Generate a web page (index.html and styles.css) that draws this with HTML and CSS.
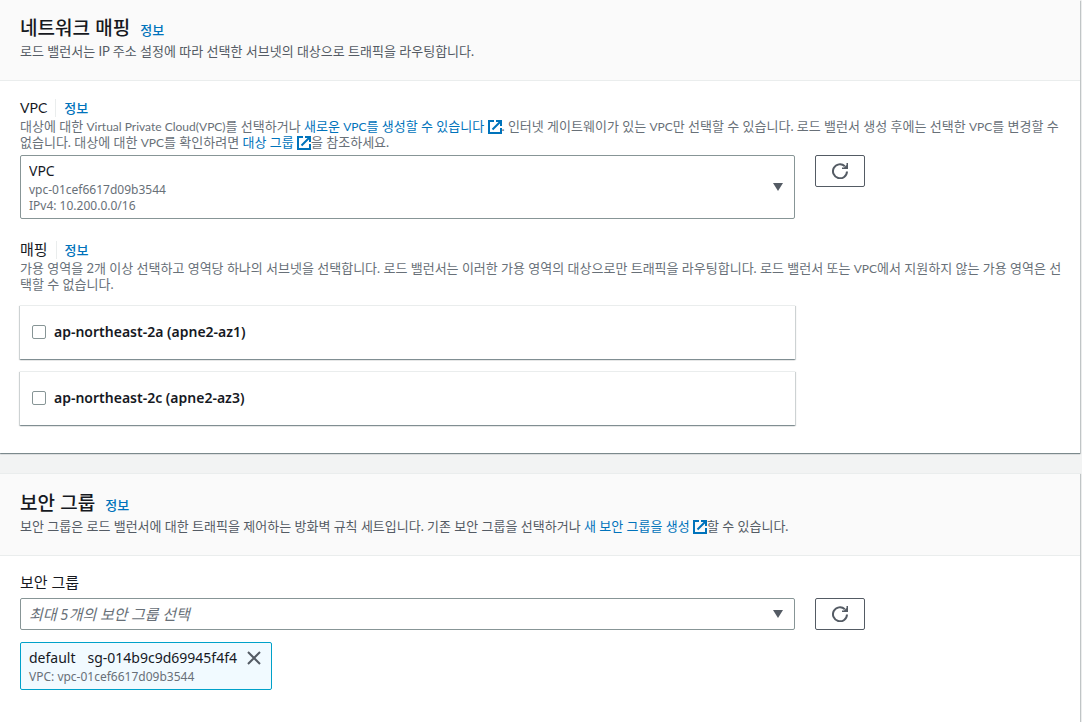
FILE: index.html
```html
<!DOCTYPE html>
<html lang="ko">
<head>
  <meta charset="UTF-8" />
  <meta name="viewport" content="width=device-width, initial-scale=1.0" />
  <title>로드 밸런서 생성</title>
  <link rel="stylesheet" href="styles.css">
</head>
<body>
  <svg class="sprite" aria-hidden="true">
    <symbol id="external" viewBox="0 0 14 14">
      <path d="M6 1H1v12h12V8" fill="none" stroke="currentColor" stroke-width="2" />
      <path d="M8 1h5v5M13 1L4.500 9.500" fill="none" stroke="currentColor" stroke-width="2" />
    </symbol>
    <symbol id="refresh" viewBox="0 0 16 16">
      <path d="M15 8.500A7 7 0 1 1 12.800 3.200" fill="none" stroke="currentColor" stroke-width="2" />
      <path d="M16 0v6h-6V4.500h2L14.500 2V0z" fill="currentColor" />
    </symbol>
    <symbol id="close" viewBox="0 0 14 14">
      <path d="M1 1l12 12M13 1L1 13" fill="none" stroke="currentColor" stroke-width="2" />
    </symbol>
    <symbol id="caret" viewBox="0 0 10 8">
      <path d="M0 0h10L5 8z" fill="currentColor" />
    </symbol>
  </svg>

  <main>
    <section class="panel">
      <header class="panel-header">
        <div class="title"><h2>네트워크 매핑</h2> <a href="#">정보</a></div>
        <p>로드 밸런서는 IP 주소 설정에 따라 선택한 서브넷의 대상으로 트래픽을 라우팅합니다.</p>
      </header>
      <div class="panel-body">
        <div class="field">
          <div class="label"><label class="name-en" for="vpc">VPC</label><a class="info" href="#">정보</a></div>
          <p class="hint">대상에 대한 <span class="en">Virtual Private Cloud(VPC)</span>를 선택하거나 <a href="#">새로운 <span class="en">VPC</span>를 생성할 수 있습니다 <svg class="external"><use href="#external" /></svg></a>. 인터넷 게이트웨이가 있는 <span class="en">VPC</span>만 선택할 수 있습니다. 로드 밸런서 생성 후에는 선택한 <span class="en">VPC</span>를 변경할 수<br>없습니다. 대상에 대한 <span class="en">VPC</span>를 확인하려면 <a href="#">대상 그룹 <svg class="external"><use href="#external" /></svg></a>을 참조하세요.</p>
          <div class="row">
            <div class="select select-tall">
              <select id="vpc"><option>VPC</option></select>
              <div class="meta">vpc-01cef6617d09b3544<br>IPv4: 10.200.0.0/16</div>
              <svg class="caret"><use href="#caret" /></svg>
            </div>
            <button class="refresh" aria-label="VPC 새로 고침"><svg><use href="#refresh" /></svg></button>
          </div>
        </div>

        <div class="field">
          <div class="label"><span>매핑</span><a class="info" href="#">정보</a></div>
          <p class="hint">가용 영역을 2개 이상 선택하고 영역당 하나의 서브넷을 선택합니다. 로드 밸런서는 이러한 가용 영역의 대상으로만 트래픽을 라우팅합니다. 로드 밸런서 또는 <span class="en">VPC</span>에서 지원하지 않는 가용 영역은 선<br>택할 수 없습니다.</p>
          <div class="row zones">
            <label class="zone"><input type="checkbox"> ap-northeast-2a (apne2-az1)</label>
            <label class="zone"><input type="checkbox"> ap-northeast-2c (apne2-az3)</label>
          </div>
        </div>
      </div>
    </section>

    <section class="panel">
      <header class="panel-header">
        <div class="title"><h2>보안 그룹</h2> <a href="#">정보</a></div>
        <p>보안 그룹은 로드 밸런서에 대한 트래픽을 제어하는 방화벽 규칙 세트입니다. 기존 보안 그룹을 선택하거나 <a href="#">새 보안 그룹을 생성 <svg class="external"><use href="#external" /></svg></a>할 수 있습니다.</p>
      </header>
      <div class="panel-body">
        <div class="field">
          <div class="label"><label for="groups">보안 그룹</label></div>
          <div class="row">
            <div class="select">
              <select id="groups" class="placeholder"><option>최대 5개의 보안 그룹 선택</option></select>
              <svg class="caret"><use href="#caret" /></svg>
            </div>
            <button class="refresh" aria-label="보안 그룹 새로 고침"><svg><use href="#refresh" /></svg></button>
          </div>
          <div class="token">
            <div>
              <div class="token-name"><span>default</span><span>sg-014b9c9d69945f4f4</span></div>
              <div class="token-vpc">VPC: vpc-01cef6617d09b3544</div>
            </div>
            <button aria-label="default 제거"><svg><use href="#close" /></svg></button>
          </div>
        </div>
      </div>
    </section>
  </main>
</body>
</html>
```
FILE: styles.css
```css
* { box-sizing: border-box; }
body { margin: 0; background: #f2f3f3; color: #16191f; font: 14px/22px "Noto Sans", "Noto Sans CJK KR", sans-serif; }
h2, p { margin: 0; }
a { color: #0073bb; text-decoration: none; }
button { padding: 0; cursor: pointer; color: #545b64; }
.sprite { display: none; }

main { display: flex; flex-direction: column; gap: 20px; padding-right: 2px; }
.panel { background: #fff; box-shadow: 0 1px 1px 0 rgba(0, 28, 36, 0.4), 1px 1px 1px 0 rgba(0, 28, 36, 0.15); }
.panel + .panel { border-top: 1px solid #eaeded; }
.panel-header { padding: 15px 20px 19px; background: #fafafa; border-bottom: 1px solid #eaeded; }
.panel + .panel .panel-header { padding-top: 16px; }
.title { display: flex; align-items: baseline; gap: 10px; line-height: 24px; }
.title h2 { font-size: 19px; font-weight: 500; font-family: "Noto Sans CJK KR", sans-serif; }
.title a { font: 500 13px/24px "Noto Sans CJK KR", sans-serif; }
.panel-header p { color: #545b64; font: 13px/19px Lato, "Noto Sans CJK KR", sans-serif; }
.panel-body { padding: 16px 20px 28px; display: flex; flex-direction: column; gap: 20px; }
.panel:last-child .panel-body { padding-bottom: 40px; }
.external { width: 14px; height: 14px; vertical-align: -3px; }

.label { display: flex; align-items: center; font-size: 15px; line-height: 21px; font-family: Lato, "Noto Sans CJK KR", sans-serif; }
.name-en { font-size: 14px; }
.info { margin-left: 8px; padding-left: 8px; border-left: 1px solid #eaeded; font-size: 13px; font-weight: 500; line-height: 18px; }
.hint { margin-right: -20px; color: #687078; font: 13px/16px Lato, "Noto Sans CJK KR", sans-serif; }
.en { font-size: 12px; line-height: 12px; }
.row { display: grid; grid-template-columns: repeat(12, 1fr); column-gap: 20px; align-items: start; margin-top: 5px; }

.select { grid-column: span 9; display: grid; }
.select > * { grid-area: 1 / 1; }
.select select { appearance: none; height: 32px; padding: 0 32px 0 8px; border: 1px solid #879596; border-radius: 2px; background: #fff; color: #16191f; font: inherit; }
.select-tall select { height: 64px; padding-bottom: 32px; }
.select .placeholder { color: #687078; font-size: 15px; font-style: italic; font-family: Lato, "Noto Sans CJK KR", sans-serif; }
.meta { align-self: end; padding: 0 9px 5px; color: #687078; font-size: 12px; line-height: 16px; pointer-events: none; }
.caret { width: 10px; height: 8px; margin-right: 12px; align-self: center; justify-self: end; color: #545b64; pointer-events: none; }
.refresh { width: 50px; height: 32px; display: grid; place-items: center; border: 1px solid #545b64; border-radius: 2px; background: #fff; }
.refresh svg { width: 16px; height: 16px; }

.zones { row-gap: 12px; margin-top: 13px; }
.zone { grid-column: 1 / span 9; display: flex; align-items: center; gap: 8px; height: 54px; padding: 0 12px 2px; border-top: 1px solid #eaeded; box-shadow: 0 1px 1px 0 rgba(0, 28, 36, 0.3), 1px 1px 1px 0 rgba(0, 28, 36, 0.15), -1px 1px 1px 0 rgba(0, 28, 36, 0.15); font-weight: 600; }
.zone input { appearance: none; width: 14px; height: 14px; margin: 0; border: 1px solid #879596; border-radius: 2px; background: #fff; }
.zone input:checked { background: #0073bb; }

.token { display: inline-flex; align-items: flex-start; gap: 10px; margin-top: 12px; padding: 4px 10px 4px 8px; border: 1px solid #00a1c9; border-radius: 2px; background: #f1faff; }
.token-name { display: flex; gap: 12px; }
.token-vpc { color: #687078; font-size: 12px; line-height: 16px; }
.token button { height: 22px; display: grid; align-items: center; border: 0; background: none; }
.token svg { width: 14px; height: 14px; }
```
